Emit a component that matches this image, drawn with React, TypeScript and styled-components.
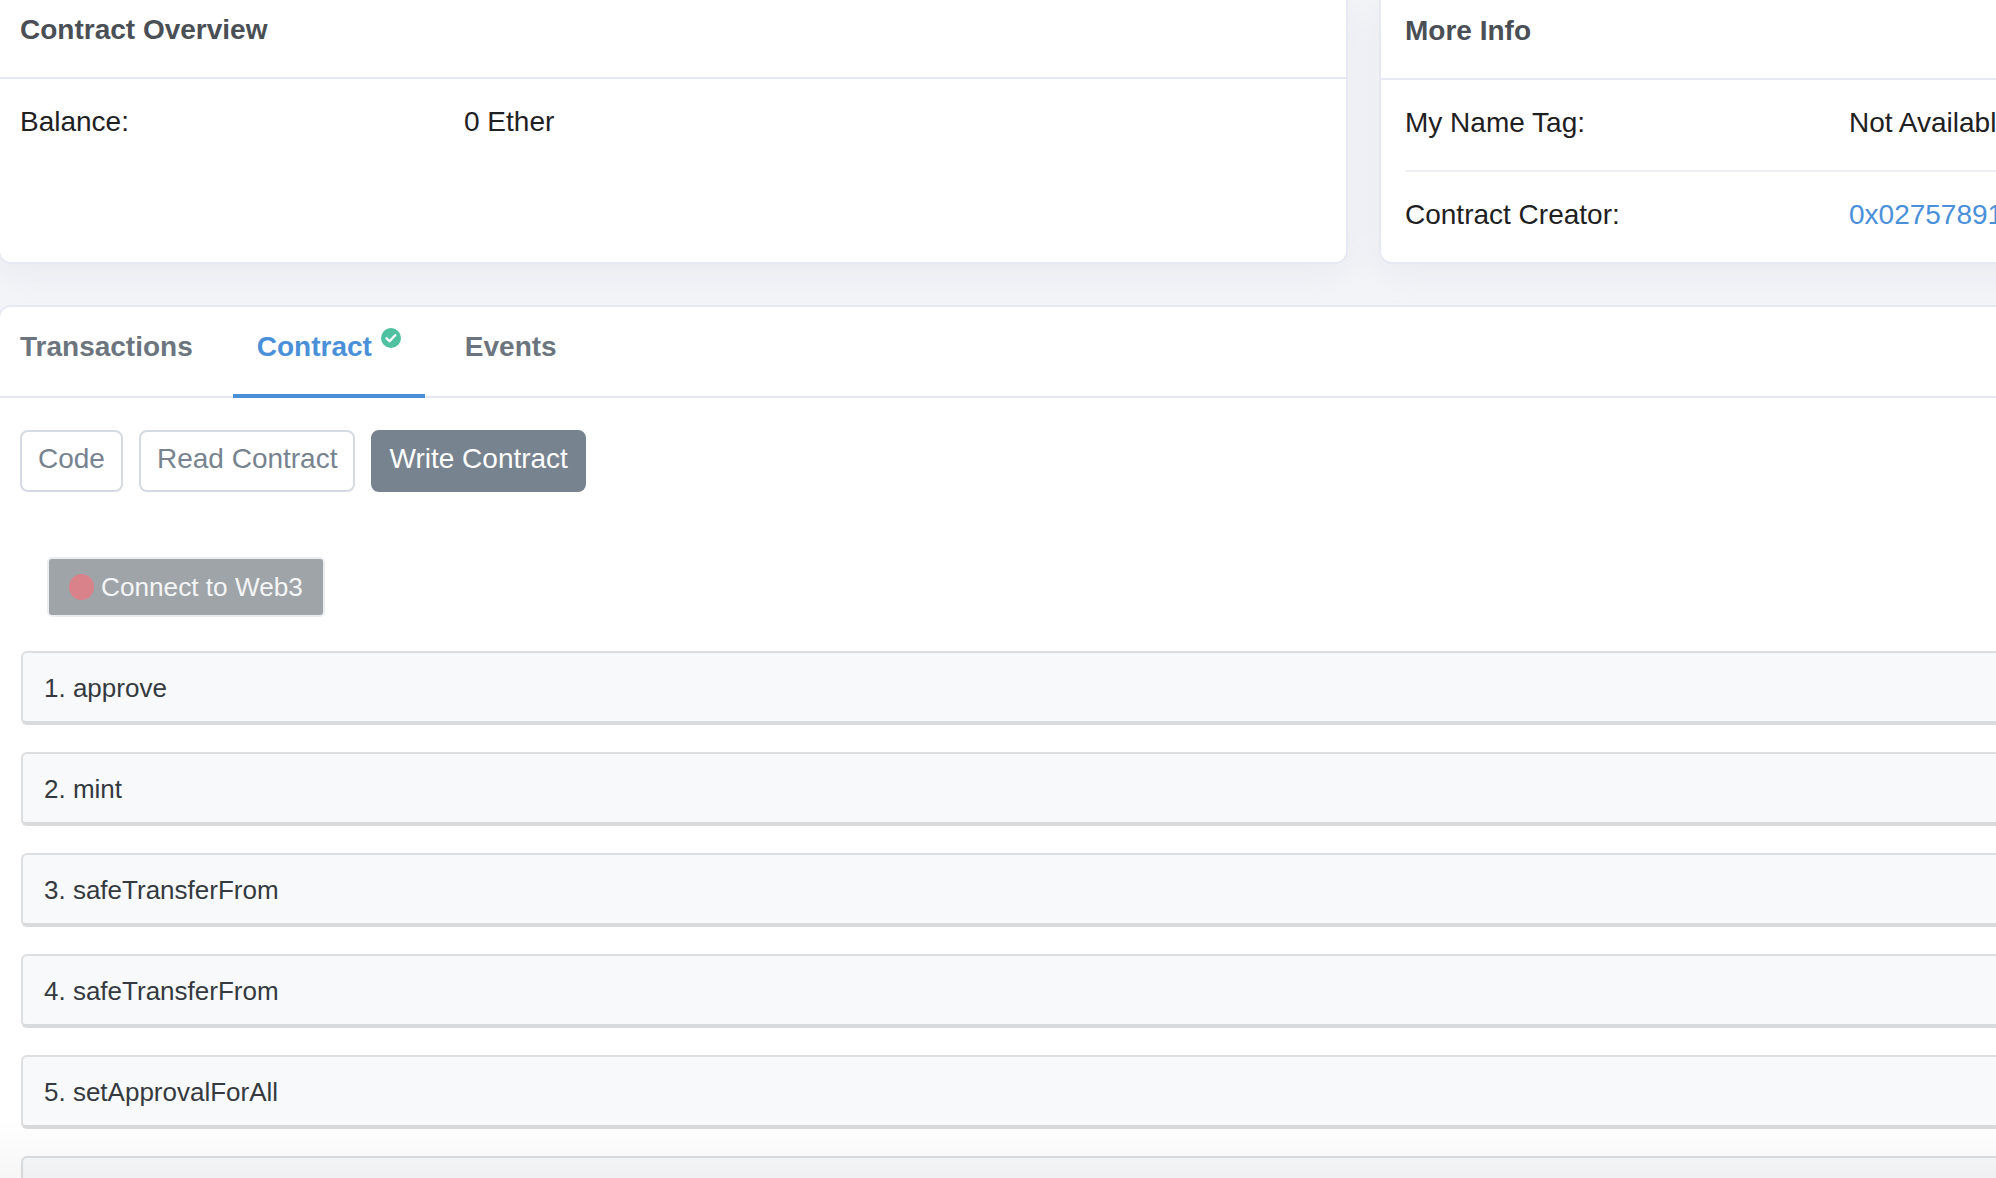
import styled, { createGlobalStyle } from "styled-components";

const GlobalStyle = createGlobalStyle`
  html, body {
    margin: 0;
    padding: 0;
    height: 100%;
    overflow: hidden;
    background: #f3f4f8;
    font-family: "Liberation Sans", Arial, sans-serif;
    font-size: 28px;
    color: #1e2022;
  }
`;

const Page = styled.div`
  position: relative;
  width: 2040px;
  height: 1178px;
  margin-left: -2px;
  overflow: hidden;
`;

const TopRow = styled.div`
  display: grid;
  grid-template-columns: 1350px 1000px;
  grid-template-rows: 264px;
  column-gap: 31px;
`;

const Card = styled.section`
  background: #fff;
  border: 2px solid #e6e8f4;
  border-top: 0;
  border-radius: 0 0 13px 13px;
  box-shadow: 0 8px 32px rgba(189, 197, 209, 0.2);
  box-sizing: border-box;
`;

const CardHeader = styled.h2<{ $inset: number; $tall?: boolean }>`
  margin: 0;
  height: ${(p) => (p.$tall ? "80px" : "79px")};
  box-sizing: border-box;
  padding: ${(p) => (p.$tall ? "15px" : "14px")} 0 0 ${(p) => p.$inset}px;
  line-height: 32px;
  font-size: 28px;
  font-weight: 700;
  color: #4a4f55;
  border-bottom: 2px solid #e6e8f4;
`;

const InfoRow = styled.div<{ $inset: number; $divided?: boolean }>`
  display: grid;
  grid-template-columns: 444px 1fr;
  align-items: center;
  height: ${(p) => (p.$divided ? "92px" : "86px")};
  margin-left: ${(p) => p.$inset}px;
  padding-bottom: ${(p) => (p.$divided ? "4px" : "0")};
  white-space: nowrap;
  border-bottom: ${(p) => (p.$divided ? "2px solid #eef0f5" : "0")};
  box-sizing: border-box;
`;

const CreatorLink = styled.a`
  color: #4a90d9;
`;

const TabsCard = styled.section`
  margin-top: 41px;
  background: #fff;
  border: 2px solid #e6e8f4;
  border-bottom: 0;
  border-radius: 13px 0 0 0;
  height: 900px;
  box-sizing: border-box;
`;

const TabBar = styled.nav`
  display: flex;
  gap: 16px;
  height: 91px;
  border-bottom: 2px solid #e6e8f4;
  box-sizing: border-box;
`;

const Tab = styled.div<{ $active?: boolean }>`
  display: flex;
  align-items: center;
  height: 91px;
  box-sizing: border-box;
  padding: 0 24px 7px;
  font-weight: 700;
  color: ${(p) => (p.$active ? "#4a90d9" : "#6c757e")};
  border-bottom: 4px solid ${(p) => (p.$active ? "#4a90d9" : "transparent")};

  &:first-child {
    padding-left: 20px;
    padding-right: 24px;
  }
`;

const TabCheck = styled.svg`
  width: 20px;
  height: 20px;
  margin: 0 0 18px 9px;
`;

const Panel = styled.div`
  padding: 32px 20px 0;
`;

const PillRow = styled.div`
  display: flex;
  gap: 16px;
`;

const Pill = styled.button<{ $active?: boolean }>`
  height: 62px;
  box-sizing: border-box;
  padding: 0 16px 4px;
  font: inherit;
  color: ${(p) => (p.$active ? "#fff" : "#77838f")};
  background: ${(p) => (p.$active ? "#77838f" : "#fff")};
  border: 2px solid ${(p) => (p.$active ? "#77838f" : "#d5dae2")};
  border-radius: 8px;
`;

const ConnectButton = styled.button`
  display: flex;
  align-items: center;
  gap: 7px;
  width: 278px;
  height: 60px;
  box-sizing: border-box;
  margin: 65px 0 34px 27px;
  padding: 0 0 0 20px;
  font: inherit;
  font-size: 26.2px;
  color: #f4f5f6;
  background: #9fa4a8;
  border: 2px solid #ebedf0;
  border-radius: 5px;
`;

const RedDot = styled.span`
  width: 25px;
  height: 26px;
  border-radius: 50%;
  background: #d9828a;
`;

const FunctionList = styled.div`
  display: flex;
  flex-direction: column;
  gap: 27px;
  margin-left: 1px;
`;

const FunctionRow = styled.div`
  display: flex;
  align-items: center;
  height: 74px;
  box-sizing: border-box;
  padding: 2px 0 0 21px;
  margin-right: -40px;
  font-size: 26px;
  color: #343a40;
  background: #f8f9fa;
  border: 2px solid #dddee0;
  border-bottom: 4px solid #d9dadc;
  border-radius: 6px;
`;

const BottomFade = styled.div`
  position: absolute;
  left: 0;
  right: 0;
  bottom: 0;
  height: 60px;
  pointer-events: none;
  background: linear-gradient(rgba(0, 0, 0, 0), rgba(0, 0, 0, 0.035));
`;

const functions = [
  "1. approve",
  "2. mint",
  "3. safeTransferFrom",
  "4. safeTransferFrom",
  "5. setApprovalForAll",
  "",
];

export default function App() {
  return (
    <>
      <GlobalStyle />
      <Page>
        <TopRow>
          <Card>
            <CardHeader $inset={20}>Contract Overview</CardHeader>
            <InfoRow $inset={20}>
              <span>Balance:</span>
              <span>0 Ether</span>
            </InfoRow>
          </Card>
          <Card>
            <CardHeader $inset={24} $tall>
              More Info
            </CardHeader>
            <InfoRow $inset={24} $divided>
              <span>My Name Tag:</span>
              <span>Not Available</span>
            </InfoRow>
            <InfoRow $inset={24}>
              <span>Contract Creator:</span>
              <CreatorLink>0x02757891</CreatorLink>
            </InfoRow>
          </Card>
        </TopRow>
        <TabsCard>
          <TabBar>
            <Tab>Transactions</Tab>
            <Tab $active>
              Contract
              <TabCheck viewBox="0 0 20 20">
                <circle cx="10" cy="10" r="10" fill="#4fc1a0" />
                <path
                  d="M5.6 10.3l3 2.9 5.6-6"
                  fill="none"
                  stroke="#fff"
                  strokeWidth="2.4"
                  strokeLinecap="round"
                  strokeLinejoin="round"
                />
              </TabCheck>
            </Tab>
            <Tab>Events</Tab>
          </TabBar>
          <Panel>
            <PillRow>
              <Pill>Code</Pill>
              <Pill>Read Contract</Pill>
              <Pill $active>Write Contract</Pill>
            </PillRow>
            <ConnectButton>
              <RedDot />
              Connect to Web3
            </ConnectButton>
            <FunctionList>
              {functions.map((name, i) => (
                <FunctionRow key={i}>{name}</FunctionRow>
              ))}
            </FunctionList>
          </Panel>
        </TabsCard>
        <BottomFade />
      </Page>
    </>
  );
}
